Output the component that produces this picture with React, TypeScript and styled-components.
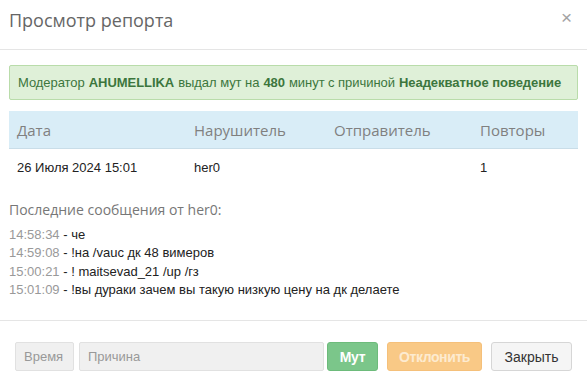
import * as React from "react";
import styled, { createGlobalStyle } from "styled-components";

const GlobalStyle = createGlobalStyle`
  html, body {
    margin: 0;
    padding: 0;
    background: #ffffff;
  }
  body {
    font-family: "Liberation Sans", Arial, sans-serif;
    font-size: 13px;
    color: #333;
  }
  * {
    box-sizing: border-box;
  }
`;

const Modal = styled.div`
  width: 587px;
  height: 384px;
  background: #fff;
  display: flex;
  flex-direction: column;
`;

const Header = styled.div`
  height: 50px;
  padding: 0 9px;
  display: flex;
  align-items: center;
  justify-content: space-between;
  border-bottom: 1px solid #e5e5e5;
`;

const Title = styled.h4`
  margin: 0 0 9px;
  font-family: "Open Sans", sans-serif;
  font-weight: 400;
  font-size: 18px;
  color: #666;
`;

const Close = styled.button`
  border: none;
  background: none;
  padding: 0;
  margin: 0 6px 14px 0;
  font-family: "Liberation Sans", Arial, sans-serif;
  font-size: 19px;
  line-height: 1;
  color: #a3a3a3;
  cursor: pointer;
`;

const Body = styled.div`
  padding: 15px 9px 0;
  flex: 1;
`;

const Alert = styled.div`
  height: 35px;
  padding: 0 8px;
  display: flex;
  align-items: center;
  background: #dff0d8;
  border: 1px solid #b9dcaa;
  border-radius: 2px;
  color: #3c763d;
  font-size: 13px;
  letter-spacing: -0.05px;

  b {
    margin: 0 4px;
  }
`;

const Table = styled.div`
  margin-top: 11px;
  display: grid;
  grid-template-columns: 177px 140px 146px 1fr;
`;

const HeadCell = styled.div`
  height: 38px;
  padding: 0 8px;
  display: flex;
  align-items: center;
  background: #d9edf7;
  border-bottom: 1px solid #c9dde8;
  font-family: "Open Sans", sans-serif;
  font-size: 15px;
  color: #808080;
`;

const Cell = styled.div`
  height: 36px;
  padding: 0 8px;
  display: flex;
  align-items: center;
  font-size: 13px;
  color: #222;
`;

const Subtitle = styled.div`
  margin-top: 15px;
  font-family: "Open Sans", sans-serif;
  font-size: 14px;
  color: #777;
`;

const Messages = styled.div`
  margin-top: 7px;
  display: flex;
  flex-direction: column;
`;

const Line = styled.div`
  height: 18.3px;
  line-height: 18px;
  font-size: 13px;
  color: #222;
`;

const Time = styled.span`
  color: #999;
`;

const Footer = styled.div`
  height: 64px;
  border-top: 1px solid #e5e5e5;
  padding: 21px 15px 0;
  display: flex;
  align-items: flex-start;
`;

const InputGroup = styled.div`
  display: flex;
  gap: 5px;
`;

const Field = styled.input<{ $w: number }>`
  width: ${(p) => p.$w}px;
  height: 29px;
  padding: 0 8px;
  border: 1px solid #e1e1e1;
  border-radius: 2px;
  background: #f0f0f0;
  font-family: "Liberation Sans", Arial, sans-serif;
  font-size: 13px;
  color: #555;

  &::placeholder {
    color: #999;
  }
`;

const Actions = styled.div`
  margin-left: 3px;
  display: flex;
  gap: 9px;
`;

const Button = styled.button<{ $bg: string; $fg: string; $border: string; $w: number; $bold?: boolean }>`
  width: ${(p) => p.$w}px;
  height: 29px;
  padding: 0;
  border: 1px solid ${(p) => p.$border};
  border-radius: 3px;
  background: ${(p) => p.$bg};
  color: ${(p) => p.$fg};
  font-family: "Liberation Sans", Arial, sans-serif;
  font-size: 14px;
  font-weight: ${(p) => (p.$bold ? 700 : 400)};
  letter-spacing: ${(p) => (p.$bold ? "-0.4px" : "0")};
  cursor: pointer;
`;

const messages = [
  { time: "14:58:34", text: "че" },
  { time: "14:59:08", text: "!на /vauc дк 48 вимеров" },
  { time: "15:00:21", text: "! maitsevad_21 /up /гз" },
  { time: "15:01:09", text: "!вы дураки зачем вы такую низкую цену на дк делаете" },
];

export default function App() {
  return (
    <>
      <GlobalStyle />
      <Modal>
        <Header>
          <Title>Просмотр репорта</Title>
          <Close>×</Close>
        </Header>
        <Body>
          <Alert>
            Модератор<b>AHUMELLIKA</b>выдал мут на<b>480</b>минут с причиной<b>Неадекватное поведение</b>
          </Alert>
          <Table>
            <HeadCell>Дата</HeadCell>
            <HeadCell>Нарушитель</HeadCell>
            <HeadCell>Отправитель</HeadCell>
            <HeadCell>Повторы</HeadCell>
            <Cell>26 Июля 2024 15:01</Cell>
            <Cell>her0</Cell>
            <Cell></Cell>
            <Cell>1</Cell>
          </Table>
          <Subtitle>Последние сообщения от her0:</Subtitle>
          <Messages>
            {messages.map((m) => (
              <Line key={m.time}>
                <Time>{m.time}</Time> - {m.text}
              </Line>
            ))}
          </Messages>
        </Body>
        <Footer>
          <InputGroup>
            <Field $w={59} placeholder="Время" />
            <Field $w={245} placeholder="Причина" />
          </InputGroup>
          <Actions>
            <Button $w={51} $bg="#7bc68a" $fg="#ffffff" $border="#6dbb7b" $bold>
              Мут
            </Button>
            <Button $w={95} $bg="#f9c986" $fg="#fdebd0" $border="#f5c07a" $bold>
              Отклонить
            </Button>
            <Button $w={81} $bg="#f5f5f5" $fg="#333" $border="#d6d6d6">
              Закрыть
            </Button>
          </Actions>
        </Footer>
      </Modal>
    </>
  );
}
